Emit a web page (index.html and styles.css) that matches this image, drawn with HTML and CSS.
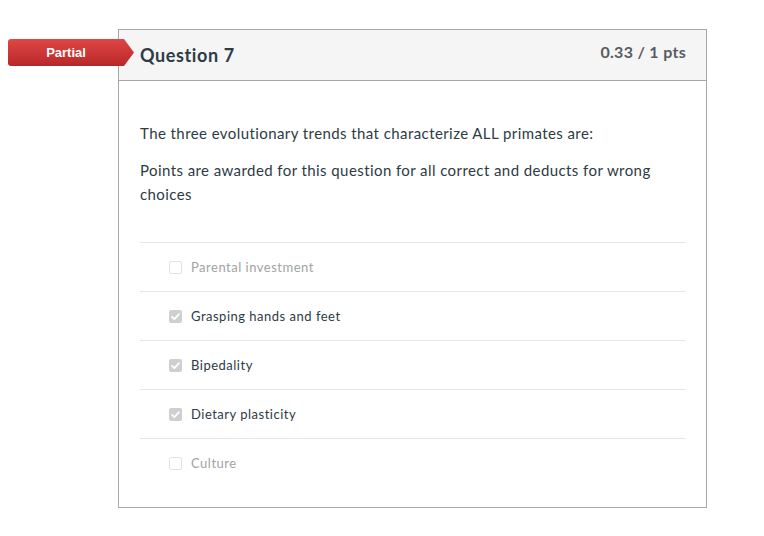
FILE: index.html
```html
<!DOCTYPE html>
<html lang="en">
<head>
<meta charset="utf-8">
<title>Question 7</title>
<link rel="stylesheet" href="styles.css">
</head>
<body>
<div class="page">
  <div class="card">
    <div class="badge">Partial</div>
    <div class="card-header">
      <h2 class="title">Question 7</h2>
      <div class="points">0.33 / 1 pts</div>
    </div>
    <div class="card-body">
      <p class="text">The three evolutionary trends that characterize ALL primates are:</p>
      <p class="text note">Points are awarded for this question for all correct and deducts for wrong choices</p>
      <ul class="answers">
        <li class="answer off"><span class="box"></span><span class="label">Parental investment</span></li>
        <li class="answer on"><span class="box"><svg viewBox="0 0 13 13" width="13" height="13"><path d="M3 6.8 L5.4 9.2 L10 4.2" fill="none" stroke="#fff" stroke-width="1.8" stroke-linecap="round" stroke-linejoin="round"/></svg></span><span class="label">Grasping hands and feet</span></li>
        <li class="answer on"><span class="box"><svg viewBox="0 0 13 13" width="13" height="13"><path d="M3 6.8 L5.4 9.2 L10 4.2" fill="none" stroke="#fff" stroke-width="1.8" stroke-linecap="round" stroke-linejoin="round"/></svg></span><span class="label">Bipedality</span></li>
        <li class="answer on"><span class="box"><svg viewBox="0 0 13 13" width="13" height="13"><path d="M3 6.8 L5.4 9.2 L10 4.2" fill="none" stroke="#fff" stroke-width="1.8" stroke-linecap="round" stroke-linejoin="round"/></svg></span><span class="label">Dietary plasticity</span></li>
        <li class="answer off"><span class="box"></span><span class="label">Culture</span></li>
      </ul>
    </div>
  </div>
</div>
</body>
</html>
```

FILE: styles.css
```css
html, body {
  margin: 0;
  padding: 0;
  background: #fff;
}
body {
  font-family: Lato, "Open Sans", sans-serif;
  color: #2d3b45;
}
.page {
  padding: 29px 0 0 118px;
}
.card {
  position: relative;
  width: 589px;
  box-sizing: border-box;
  border: 1px solid #a8a8a8;
  background: #fff;
}
.badge {
  position: absolute;
  left: -111px;
  top: 9px;
  width: 126px;
  height: 27px;
  box-sizing: border-box;
  padding-right: 10px;
  background: linear-gradient(#e04645, #b82828);
  border-radius: 3px;
  clip-path: polygon(0 0, 116px 0, 126px 50%, 116px 100%, 0 100%);
  color: #fff;
  font-family: "Liberation Sans", Arial, sans-serif;
  font-weight: bold;
  font-size: 13px;
  line-height: 27px;
  text-align: center;
}
.card-header {
  height: 50px;
  background: #f5f5f5;
  border-bottom: 1px solid #a8a8a8;
  display: flex;
  justify-content: space-between;
  align-items: flex-start;
  padding: 0 20px 0 21px;
}
.title {
  margin: 0;
  padding-top: 14px;
  font-size: 18px;
  line-height: 22px;
  font-weight: 700;
  letter-spacing: 0.6px;
  color: #2d3b45;
}
.points {
  padding-top: 12px;
  font-size: 16px;
  line-height: 20px;
  font-weight: 700;
  letter-spacing: 0.3px;
  color: #555c63;
}
.card-body {
  padding: 40px 20px 20px 21px;
}
.text {
  margin: 0;
  font-size: 15px;
  line-height: 24px;
  letter-spacing: 0.42px;
  color: #2d3b45;
}
.note {
  margin-top: 13px;
}
.answers {
  list-style: none;
  margin: 36px 0 0;
  padding: 0;
}
.answer {
  height: 49px;
  box-sizing: border-box;
  border-top: 1px solid #e6e6e6;
  display: flex;
  align-items: center;
  padding-left: 29px;
  gap: 9px;
  font-size: 13px;
  letter-spacing: 0.5px;
}
.box {
  width: 13px;
  height: 13px;
  box-sizing: border-box;
  border-radius: 2px;
  display: inline-flex;
}
.off .box {
  border: 1px solid #e2e2e2;
  background: #fff;
}
.on .box {
  background: #cfcfcf;
}
.off .label {
  color: #a3a3a3;
}
.on .label {
  color: #2d3b45;
}
```
